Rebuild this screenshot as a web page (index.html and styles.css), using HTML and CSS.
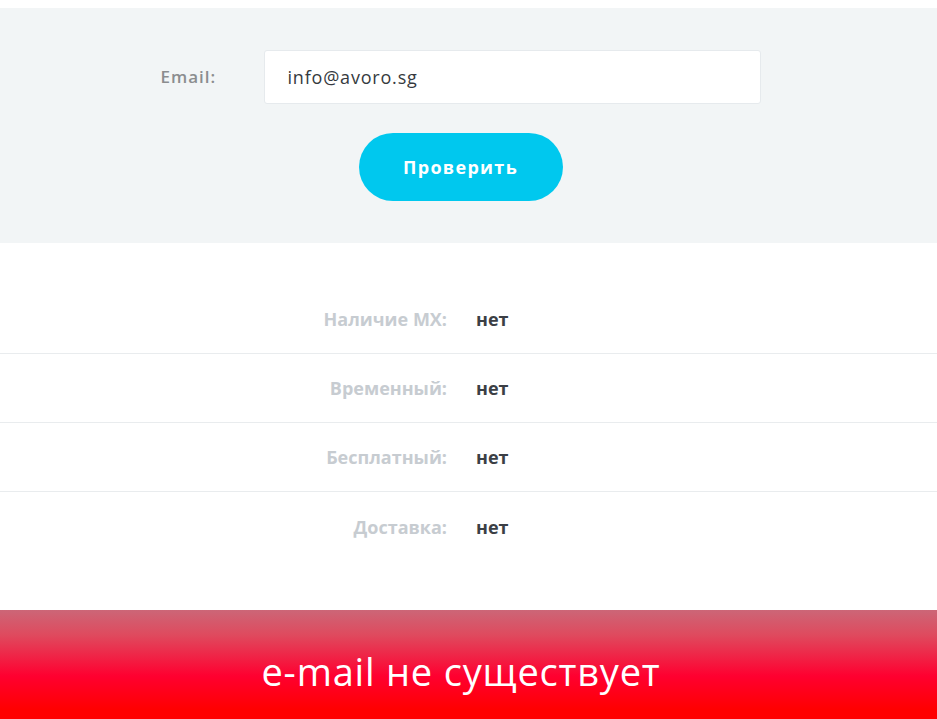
FILE: index.html
```html
<!DOCTYPE html>
<html lang="ru">
<head>
<meta charset="utf-8">
<title>Проверка email</title>
<link rel="stylesheet" href="styles.css">
</head>
<body>
<section class="check">
  <form class="check-form">
    <div class="field">
      <label class="field-label" for="email">Email:</label>
      <div class="field-input" id="email">info@avoro.sg</div>
    </div>
    <button class="btn" type="button">Проверить</button>
  </form>
</section>
<section class="results">
  <div class="row"><span class="row-label">Наличие MX:</span><span class="row-value">нет</span></div>
  <div class="row"><span class="row-label">Временный:</span><span class="row-value">нет</span></div>
  <div class="row"><span class="row-label">Бесплатный:</span><span class="row-value">нет</span></div>
  <div class="row"><span class="row-label">Доставка:</span><span class="row-value">нет</span></div>
</section>
<section class="banner">
  <div class="banner-text">e-mail не существует</div>
</section>
</body>
</html>
```
FILE: styles.css
```css
html, body { margin: 0; padding: 0; }
body {
  font-family: "Open Sans", "Liberation Sans", sans-serif;
  background: #fff;
  padding-top: 8px;
  overflow: hidden;
}
.check {
  background: #f2f5f6;
  height: 235px;
  box-sizing: border-box;
  padding-top: 42px;
}
.check-form {
  display: flex;
  flex-direction: column;
  align-items: center;
}
.field {
  display: flex;
  align-items: center;
  margin-left: -26px;
}
.field-label {
  width: 113px;
  padding-left: 10px;
  box-sizing: border-box;
  font-size: 17px;
  font-weight: 600;
  letter-spacing: 1px;
  color: #8b8d8f;
  margin-top: -2px;
}
.field-input {
  width: 497px;
  height: 54px;
  box-sizing: border-box;
  background: #fff;
  border: 1px solid #e6eaed;
  border-radius: 3px;
  padding: 0 23px;
  display: flex;
  align-items: center;
  font-size: 18px;
  letter-spacing: 0.8px;
  color: #353a40;
}
.btn {
  margin-top: 29px;
  margin-left: -16px;
  width: 204px;
  height: 68px;
  border: none;
  border-radius: 34px;
  background: #00c8ee;
  color: #fff;
  font-family: inherit;
  font-size: 18px;
  font-weight: 700;
  letter-spacing: 1.3px;
  padding: 0;
}
.results {
  padding-top: 42px;
  height: 367px;
  box-sizing: border-box;
}
.row {
  display: grid;
  grid-template-columns: 447px 1fr;
  column-gap: 29px;
  align-items: center;
  height: 69px;
  box-sizing: border-box;
  border-bottom: 1px solid #e9ecee;
  font-size: 18px;
  font-weight: 700;
}
.row:last-child { border-bottom: none; }
.row-label { text-align: right; color: #c7ccd1; }
.row-value { color: #3b3f45; }
.banner {
  height: 120px;
  background: linear-gradient(180deg, #cc6677 0px, #df4a5e 25px, #ff0030 66px, #ff0000 100px);
  display: flex;
  justify-content: center;
  padding-top: 35px;
  box-sizing: border-box;
}
.banner-text {
  color: #fff;
  font-size: 38px;
  font-weight: 500;
  margin-left: -15px;
  letter-spacing: 0.8px;
}
```
